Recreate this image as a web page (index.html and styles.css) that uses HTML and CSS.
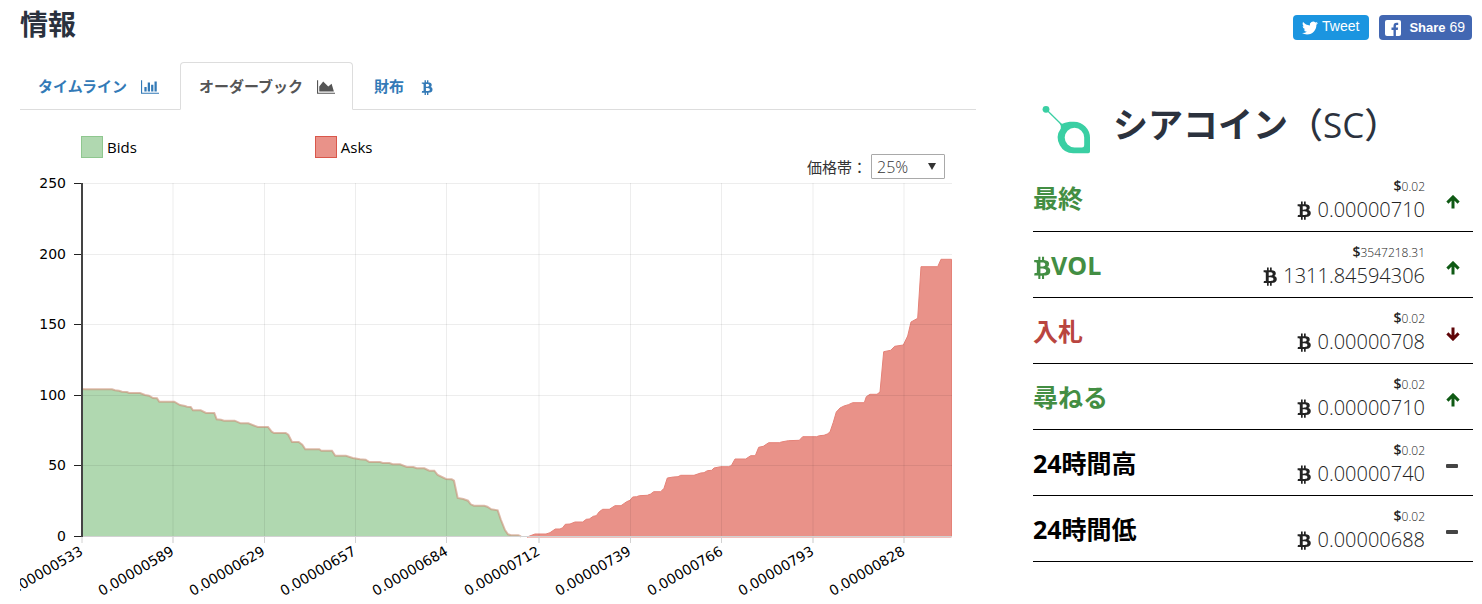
FILE: index.html
```html
<!DOCTYPE html>
<html lang="ja">
<head>
<meta charset="utf-8">
<title>シアコイン（SC）</title>
<meta name="viewport" content="width=device-width, initial-scale=1">
<link rel="stylesheet" href="styles.css">
</head>
<body>
<svg class="defs" aria-hidden="true">
  <symbol id="btc" viewBox="0 0 1280 1792"><path d="M1167 640q18 182-131 258 117 28 175 103t45 214q-7 71-32.500 125t-64.500 89-97 58.500-121.500 34.500-145.500 15v255h-154v-251q-80 0-122-1v252h-154v-255q-18 0-54-.5t-55-.5h-200l31-183h111q50 0 58-51v-402h16q-6-1-16-1v-287q-13-68-89-68h-111v-164l212 1q64 0 97-1v-252h154v247q82-2 122-2v-245h154v252q79 7 140 22.500t113 45 82.500 78 36.500 114.500zm-215 545q0-36-15-64t-37-46-57.500-30.500-65.500-18.500-74-9-69-3-64.500 1-47.500 1v338q8 0 37 .5t48 .5 53-1.500 58.500-4 57-8.500 55.500-14 47.500-21 39.500-30 24.500-40 9.500-51zm-71-476q0-33-12.500-58.500t-30.500-42-48-28-55-16.500-61.500-8-58-2.500-54 1-39.500.5v307q5 0 34.500.5t46.500 0 50-2 55-5.500 51.500-11 48.500-18.500 37-27 27-38.500 9-51z"/></symbol>
  <symbol id="up" viewBox="0 0 14 14"><path d="M7 13.500V3M1.400 7.600 7 2l5.600 5.600" fill="none" stroke="currentColor" stroke-width="3"/></symbol>
  <symbol id="down" viewBox="0 0 14 14"><path d="M7 .5V11M1.400 6.400 7 12l5.600-5.600" fill="none" stroke="currentColor" stroke-width="3"/></symbol>
  <symbol id="flat" viewBox="0 0 14 14"><rect x="0" y="5" width="12" height="4" rx="1"/></symbol>
</svg>

<header class="top">
  <h1 class="title">情報</h1>
  <div class="share">
    <a class="share-btn tweet" href="#tweet">
      <svg width="16" height="16" viewBox="0 0 24 24" aria-hidden="true"><path fill="#fff" d="M23.953 4.570a10 10 0 01-2.825.775 4.958 4.958 0 002.163-2.723c-.951.555-2.005.959-3.127 1.184a4.920 4.920 0 00-8.384 4.482C7.690 8.095 4.067 6.130 1.640 3.162a4.822 4.822 0 00-.666 2.475c0 1.710.870 3.213 2.188 4.096a4.904 4.904 0 01-2.228-.616v.060a4.923 4.923 0 003.946 4.827 4.996 4.996 0 01-2.212.085 4.936 4.936 0 004.604 3.417 9.867 9.867 0 01-6.102 2.105c-.390 0-.779-.023-1.170-.067a13.995 13.995 0 007.557 2.209c9.053 0 13.998-7.496 13.998-13.985 0-.210 0-.420-.015-.630A9.935 9.935 0 0024 4.590z"/></svg>
      <span>Tweet</span>
    </a>
    <a class="share-btn facebook" href="#share">
      <svg width="16" height="16" viewBox="0 0 16 16" aria-hidden="true"><rect width="16" height="16" rx="2" fill="#fff"/><path fill="#4267b2" d="M8.500 16V10H6.500V7.500h2V6c0-2 1.200-3.200 3-3.200h1.700V5h-1.100c-.9 0-1.200.4-1.200 1.200v1.300h2.200l-.3 2.500h-1.900v6z"/></svg>
      <span class="share-label"><strong>Share</strong> 69</span>
    </a>
  </div>
</header>

<div class="columns">
  <main class="main">
    <nav class="tabs">
      <a class="tab" href="#timeline">タイムライン
        <svg width="18" height="16" viewBox="0 0 2048 1792" aria-hidden="true"><path d="M640 896v512h-256v-512h256zm384-512v1024h-256v-1024h256zm1024 1152v128h-2048v-1536h128v1408h1920zm-640-896v768h-256v-768h256zm384-384v1152h-256v-1152h256z"/></svg>
      </a>
      <a class="tab active" href="#orderbook" aria-current="page">オーダーブック
        <svg width="18" height="16" viewBox="0 0 2048 1792" aria-hidden="true"><path d="M2048 1536v128h-2048v-1536h128v1408h1920zm-384-1024l256 896h-1664v-576l448-576 576 576z"/></svg>
      </a>
      <a class="tab wallet" href="#wallet">財布
        <svg width="12" height="16" aria-hidden="true"><use href="#btc"/></svg>
      </a>
    </nav>

    <div class="toolbar">
      <ul class="legend">
        <li class="key bids">Bids</li>
        <li class="key asks">Asks</li>
      </ul>
      <div class="range">
        <label for="range">価格帯：</label>
        <span class="select-box">
          <select id="range"><option>25%</option><option>50%</option><option>100%</option></select>
          <svg width="8" height="7" viewBox="0 0 8 7" aria-hidden="true"><path d="M0 0h8L4 7z"/></svg>
        </span>
      </div>
    </div>

    <svg class="chart" viewBox="20 179 956 420" role="img" aria-label="オーダーブック">
      <path class="area-bids" d="M82 537V389L85 389.300H112L115 390.300L119 390.700L122 391.700L127 392L129 393H140L145 395L149 395.700L153 398L157 398.300L159.300 401.700H174.300L180 405L185 406L187 406.700L190.700 407L193 410.300H200.700L206 413H214.300L216.700 419.300L221 419.700L224 420.700H234.700L240.700 423.300H248.300L257.700 427H268L271.700 431.700L274 433H285.700L288.300 434.700L292 442H298.700L302.300 444.700L305.300 449.300H319.300L321.300 450.700H332L335.300 455.700H346L352.700 458L360 459.300L365.700 459.700L369.300 462H380L382.700 463H389.300L392.700 464.300H400L406.700 467H413.300L416.700 468.300H424.300L429.300 470.700H434.300L437.700 475L446 479L451.700 479.300L454 480.700L457.700 498L463.300 499L468 500.700L470.700 504.300L474 505.700H484.300L487.300 506.700L491.300 509.300L497.700 510.300L500.700 519.300L505 530L508 534.300L511 535.300H518.300L521 536.500V537z"/>
      <path class="area-asks" d="M527 537L535 534H546L550 532.700L555.300 529H560L562.700 527.700L565.300 524.300L570 524L575 522H582.700L586.300 519.300L589.300 519L593.300 516.300L596.300 515.700L599.300 511.700L602.700 509.300H609.300L615 505.700H621L626.700 501.700L630 500.300L632.700 497L636.700 496.700L639.300 495.700L647.300 495.300L650.700 494L653.700 491.700H660.700L664 488.300L667.300 478L673.300 477L678 476.700L680.700 475.300H694L700.700 473L704 472.700L707.300 470.700L711.700 470.300L714 468L720.700 466.700H728.300L731.300 465.700L735 459H745.700L750.700 455.700H755.300L758.700 447.300L763.300 446.300L768.700 442.700H779.300L781.300 442L788.300 440.700L799.300 440.300L802.700 436.700H816.700L819.300 435.700L824 435.300L827.300 434L830 432L833.300 422.300L836.300 412L840 408L844 406L848.300 404.700L852.700 402.700H864.300L866.300 396.700L870 394.300H877L880 392L883.700 351.700L890.700 350.300L894.700 346.300L903.300 345L907.700 336L911 322L917.700 318.300L921 266.700H937.700L941 259.300H951.500V537z"/>
      <g class="grid">
        <path d="M82 183.500H952M82 254.500H952M82 324.500H952M82 395.500H952M82 465.500H952"/>
        <path d="M173 183V543M264.500 183V543M355.500 183V543M446.500 183V543M539 183V543M630.500 183V543M721.500 183V543M813 183V543M904 183V543"/>
      </g>
      <path class="line-bids" d="M82 389L85 389.300H112L115 390.300L119 390.700L122 391.700L127 392L129 393H140L145 395L149 395.700L153 398L157 398.300L159.300 401.700H174.300L180 405L185 406L187 406.700L190.700 407L193 410.300H200.700L206 413H214.300L216.700 419.300L221 419.700L224 420.700H234.700L240.700 423.300H248.300L257.700 427H268L271.700 431.700L274 433H285.700L288.300 434.700L292 442H298.700L302.300 444.700L305.300 449.300H319.300L321.300 450.700H332L335.300 455.700H346L352.700 458L360 459.300L365.700 459.700L369.300 462H380L382.700 463H389.300L392.700 464.300H400L406.700 467H413.300L416.700 468.300H424.300L429.300 470.700H434.300L437.700 475L446 479L451.700 479.300L454 480.700L457.700 498L463.300 499L468 500.700L470.700 504.300L474 505.700H484.300L487.300 506.700L491.300 509.300L497.700 510.300L500.700 519.300L505 530L508 534.300L511 535.300H518.300L521 536.500"/>
      <path class="baseline" d="M82 536.500H952M82 537V543M173 537V543M264.500 537V543M355.500 537V543M446.500 537V543M539 537V543M630.500 537V543M721.500 537V543M813 537V543M904 537V543"/>
      <path class="axis" d="M82 183V537"/>
      <path class="ticks" d="M74 183.500H81M74 254.500H81M74 324.500H81M74 395.500H81M74 465.500H81M74 536.500H81"/>
      <g class="tick-y">
        <text x="66" y="188">250</text>
        <text x="66" y="259">200</text>
        <text x="66" y="329">150</text>
        <text x="66" y="400">100</text>
        <text x="66" y="470">50</text>
        <text x="66" y="541">0</text>
      </g>
      <g class="tick-x">
        <text transform="translate(84 554) rotate(-30)">0.00000533</text>
        <text transform="translate(175 554) rotate(-30)">0.00000589</text>
        <text transform="translate(266 554) rotate(-30)">0.00000629</text>
        <text transform="translate(357 554) rotate(-30)">0.00000657</text>
        <text transform="translate(449 554) rotate(-30)">0.00000684</text>
        <text transform="translate(541 554) rotate(-30)">0.00000712</text>
        <text transform="translate(632 554) rotate(-30)">0.00000739</text>
        <text transform="translate(724 554) rotate(-30)">0.00000766</text>
        <text transform="translate(815 554) rotate(-30)">0.00000793</text>
        <text transform="translate(906 554) rotate(-30)">0.00000828</text>
      </g>
    </svg>
  </main>

  <aside class="side">
    <div class="coin">
      <svg width="50" height="50" viewBox="0 0 50 50" aria-hidden="true">
        <circle cx="4" cy="4.300" r="3.400" fill="#3acfa3"/>
        <path d="M4 4.300 20 20" stroke="#3acfa3" stroke-width="1.300"/>
        <path fill="#3acfa3" fill-rule="evenodd" d="M17.500 17.800q1.800 1.500 3.500.6C24 17 28 16.500 32 16.700A16 16 0 0 1 48 32.700V46.500q0 1.700-1.700 1.700H32.500A15.600 15.600 0 0 1 18.800 23.500q.3-3-1.300-5.700zM32.500 22.800a9.800 9.800 0 0 0 0 19.600H40q2.200 0 2.200-2.200V32.500a9.700 9.700 0 0 0-9.700-9.700z"/>
      </svg>
      <h2 class="coin-name">シアコイン<span class="code">（SC）</span></h2>
    </div>
    <table class="stats">
      <tbody>
        <tr class="rise">
          <th scope="row">最終</th>
          <td class="value"><div class="usd"><b>$</b>0.02</div><div class="amount"><svg class="coin-sign" role="img" aria-label="BTC"><use href="#btc"/></svg>0.00000710</div></td>
          <td class="trend"><svg role="img" aria-label="上昇"><use href="#up"/></svg></td>
        </tr>
        <tr class="rise">
          <th scope="row"><svg class="label-sign" role="img" aria-label="BTC"><use href="#btc"/></svg>VOL</th>
          <td class="value"><div class="usd"><b>$</b>3547218.31</div><div class="amount"><svg class="coin-sign" role="img" aria-label="BTC"><use href="#btc"/></svg>1311.84594306</div></td>
          <td class="trend"><svg role="img" aria-label="上昇"><use href="#up"/></svg></td>
        </tr>
        <tr class="fall">
          <th scope="row">入札</th>
          <td class="value"><div class="usd"><b>$</b>0.02</div><div class="amount"><svg class="coin-sign" role="img" aria-label="BTC"><use href="#btc"/></svg>0.00000708</div></td>
          <td class="trend"><svg role="img" aria-label="下落"><use href="#down"/></svg></td>
        </tr>
        <tr class="rise">
          <th scope="row">尋ねる</th>
          <td class="value"><div class="usd"><b>$</b>0.02</div><div class="amount"><svg class="coin-sign" role="img" aria-label="BTC"><use href="#btc"/></svg>0.00000710</div></td>
          <td class="trend"><svg role="img" aria-label="上昇"><use href="#up"/></svg></td>
        </tr>
        <tr>
          <th scope="row">24時間高</th>
          <td class="value"><div class="usd"><b>$</b>0.02</div><div class="amount"><svg class="coin-sign" role="img" aria-label="BTC"><use href="#btc"/></svg>0.00000740</div></td>
          <td class="trend"><svg role="img" aria-label="変化なし"><use href="#flat"/></svg></td>
        </tr>
        <tr>
          <th scope="row">24時間低</th>
          <td class="value"><div class="usd"><b>$</b>0.02</div><div class="amount"><svg class="coin-sign" role="img" aria-label="BTC"><use href="#btc"/></svg>0.00000688</div></td>
          <td class="trend"><svg role="img" aria-label="変化なし"><use href="#flat"/></svg></td>
        </tr>
      </tbody>
    </table>
  </aside>
</div>
</body>
</html>
```

FILE: styles.css
```css
*, *::before { box-sizing: border-box; }

body {
  margin: 0;
  padding: 0 9px 0 20px;
  background: #fff;
  color: #333;
  font-family: "Open Sans", "Noto Sans CJK JP", sans-serif;
  font-size: 15px;
}

svg { fill: currentColor; }
.defs { display: none; }

.top {
  display: flex;
  justify-content: space-between;
  height: 62px;
}
.title {
  margin: 4px 0 0;
  color: #2b323e;
  font-size: 28px;
  line-height: 40px;
  font-weight: 700;
}
.share {
  display: flex;
  align-items: flex-start;
  gap: 10px;
  padding: 15px 1px 0 0;
}
.share-btn {
  display: flex;
  align-items: center;
  height: 25px;
  border-radius: 4px;
  color: #fff;
  font-family: "Liberation Sans", Arial, sans-serif;
  font-size: 14px;
  text-decoration: none;
}
.tweet {
  gap: 4px;
  padding: 0 10px 0 9px;
  background: #1b95e0;
}
.tweet span { padding-bottom: 3px; }
.facebook {
  gap: 8px;
  padding: 0 7px 0 6px;
  background: #4267b2;
}
.share-label { padding-bottom: 1px; }
.share-label strong { font-size: 13px; }

.columns {
  display: grid;
  grid-template-columns: minmax(0, 956fr) minmax(0, 440fr);
  gap: 57px;
}

.tabs {
  display: flex;
  border-bottom: 1px solid #ddd;
}
.tab {
  display: flex;
  align-items: center;
  gap: 14px;
  height: 48px;
  margin-bottom: -1px;
  padding: 0 20px 0 18px;
  border: 1px solid transparent;
  border-radius: 4px 4px 0 0;
  color: #337ab7;
  font-weight: 600;
  line-height: 20px;
  text-decoration: none;
}
.tab svg { margin-top: 2px; }
.tab:first-child { border-left: 0; }
.active {
  padding: 0 17px 0 18px;
  border-color: #ddd #ddd #fff;
  color: #555;
}
.wallet { gap: 17px; padding-left: 20px; }

.toolbar {
  display: flex;
  justify-content: space-between;
  height: 69px;
  padding: 0 31px 0 61px;
}
.legend {
  display: flex;
  gap: 178px;
  margin: 26px 0 0;
  padding: 0;
  list-style: none;
}
.key {
  display: flex;
  align-items: center;
  gap: 4px;
  height: 22px;
  color: #000;
}
.key::before {
  content: "";
  width: 22px;
  height: 22px;
  border: 1px solid;
}
.bids::before { background: #b0d8b0; border-color: #8fc78f; }
.asks::before { background: #e99289; border-color: #d9574b; }

.range {
  display: flex;
  align-items: center;
  align-self: flex-end;
  gap: 4px;
}
.select-box { display: grid; align-items: center; }
.select-box > * { grid-area: 1 / 1; }
.select-box svg { justify-self: end; margin-right: 9px; pointer-events: none; }
.range select {
  width: 74px;
  height: 25px;
  padding: 0 5px;
  border: 1px solid #a9a9a9;
  border-radius: 1px;
  appearance: none;
  background: #fff;
  color: #333;
  font: 300 16px "Open Sans", sans-serif;
}

.chart {
  display: block;
  width: 100%;
  overflow: visible;
  clip-path: inset(-10px 0);
}
.chart text {
  fill: #000;
  font-family: "DejaVu Sans", sans-serif;
  font-size: 14px;
  text-anchor: end;
}
.area-bids { fill: #b0d8b0; }
.line-bids { fill: none; stroke: #c98d74; stroke-width: 2; stroke-opacity: .6; }
.area-asks { fill: #e99289; stroke: #e58278; stroke-width: 1; }
.grid { stroke: #000; stroke-opacity: .07; }
.baseline { fill: none; stroke: #d2d2d2; }
.axis { stroke: #444; stroke-width: 2; }
.ticks { stroke: #222; }

.side { padding-top: 36px; }
.coin {
  display: flex;
  align-items: flex-start;
  gap: 21px;
  height: 67px;
  padding: 0 0 0 9px;
}
.coin svg { flex: none; margin-top: 7px; }
.coin-name {
  margin: 3px 0 0;
  color: #2b323e;
  font-size: 35px;
  line-height: 48px;
  font-weight: 700;
  white-space: nowrap;
}
.code { font-weight: 500; }

.stats {
  width: 100%;
  border-collapse: collapse;
}
.stats tr { height: 66px; border-bottom: 1px solid #000; }
.stats th, .stats td { padding: 0; }
.stats th {
  padding-top: 1px;
  color: #000;
  font-size: 25px;
  line-height: 36px;
  font-weight: 700;
  text-align: left;
}
.stats .rise th { color: #438e43; }
.stats .fall th { color: #b94540; }
.label-sign {
  width: 18px;
  height: 24px;
  vertical-align: -4px;
}
.stats .value { padding-top: 5px; color: #222; text-align: right; }
.usd {
  font-size: 12px;
  line-height: 18px;
  font-weight: 300;
}
.usd b { font-size: 14px; font-weight: 600; }
.amount {
  font-size: 20px;
  line-height: 28px;
  font-weight: 300;
}
.coin-sign {
  width: 14px;
  height: 20px;
  margin-right: 6px;
  vertical-align: -3px;
}
.trend { width: 48px; color: #444; }
.trend svg {
  display: block;
  width: 14px;
  height: 14px;
  margin: 8px 0 0 21px;
}
.rise .trend { color: #0f5a14; }
.fall .trend { color: #5f0508; }
```
